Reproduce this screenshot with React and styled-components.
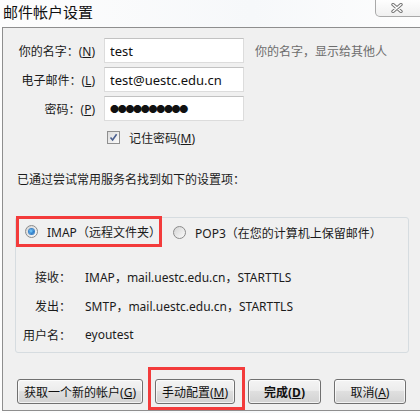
import React from 'react'
import styled, { createGlobalStyle } from 'styled-components'

const GlobalStyle = createGlobalStyle`
  html, body {
    margin: 0;
    padding: 0;
    background: #fbfbfb;
    overflow: hidden;
  }
  * {
    box-sizing: border-box;
  }
`

const Window = styled.div`
  width: 420px;
  height: 413px;
  display: flex;
  flex-direction: column;
  font-family: "Noto Sans", "Noto Sans CJK SC", sans-serif;
  font-size: 12px;
  color: #1b1b1b;
  background: linear-gradient(90deg, #fdfdfd, #f6f8fa 60%, #fdfdfd);
`

const TitleBar = styled.div`
  height: 27px;
  flex: 0 0 27px;
  display: flex;
  justify-content: space-between;
  align-items: flex-start;
  padding-left: 3px;
`

const Title = styled.div`
  font-family: "Noto Sans CJK SC", sans-serif;
  font-size: 15px;
  line-height: 24px;
  color: #111;
`

const CloseButton = styled.div`
  width: 46px;
  height: 18px;
  margin-top: -1px;
  margin-right: -1px;
  border: 1px solid #a9a9a9;
  border-top: none;
  border-bottom-left-radius: 5px;
  background: linear-gradient(#ffffff, #f0f0f0);
  display: flex;
  align-items: center;
  justify-content: center;
  padding-right: 2px;
`

const Body = styled.div`
  height: 384px;
  margin-left: 2px;
  border: 1px solid #8e8e8e;
  border-right: none;
  background: #f0f0f0;
  display: flex;
  flex-direction: column;
`

const FormGrid = styled.div`
  margin-top: 10px;
  display: grid;
  grid-template-columns: 92px 140px auto;
  grid-auto-rows: 25px;
  column-gap: 9px;
  row-gap: 4px;
  align-items: center;
`

const Label = styled.label`
  text-align: right;
  white-space: nowrap;
  font-family: "Noto Sans", "Noto Sans CJK SC", sans-serif;
  font-size: 12px;
`

const TextInput = styled.input`
  width: 140px;
  height: 25px;
  border: 1px solid #dcdcdc;
  border-top-color: #c2c2c2;
  background: #fff;
  padding: 0 5px;
  font-family: "Noto Sans", "Noto Sans CJK SC", sans-serif;
  font-size: ${(p) => (p.$dots ? '9px' : '13px')};
  letter-spacing: ${(p) => (p.$dots ? '-1.3px' : '0')};
  color: #111;
  outline: none;
`

const Hint = styled.span`
  margin-left: 2px;
  color: #6d6d6d;
  white-space: nowrap;
  font-family: "Noto Sans CJK SC", sans-serif;
`

const CheckRow = styled.label`
  grid-column: 2 / 4;
  height: 20px;
  display: flex;
  align-items: center;
  gap: 9px;
  padding-left: 3px;
`

const CheckBox = styled.span`
  width: 13px;
  height: 13px;
  border: 1px solid #8f8f8f;
  background: linear-gradient(135deg, #dcdcdc, #fbfbfb);
  display: flex;
  align-items: center;
  justify-content: center;
`

const Notice = styled.div`
  margin-top: 21px;
  margin-left: 14px;
  line-height: 16px;
  font-family: "Noto Sans CJK SC", sans-serif;
`

const GroupBox = styled.div`
  margin-top: 30px;
  margin-left: 12px;
  width: 394px;
  height: 136px;
  border: 1px solid #d6dce0;
  border-radius: 3px;
  display: flex;
  flex-direction: column;
`

const RadioRow = styled.div`
  display: flex;
  align-items: center;
`

const Highlight = styled.div`
  border: 3px solid #f33b3b;
  display: flex;
  align-items: center;
  flex: 0 0 auto;
`

const RadioHighlight = styled(Highlight)`
  width: 146px;
  height: 31px;
  margin-top: -2px;
  padding-left: 6px;
`

const RadioOption = styled.label`
  display: flex;
  align-items: center;
  gap: 9px;
  margin-left: ${(p) => p.$gap || 0}px;
  white-space: nowrap;
`

const Radio = styled.span`
  width: 13px;
  height: 13px;
  border-radius: 50%;
  border: 1px solid #8b8b8b;
  background: linear-gradient(135deg, #d4d4d4, #fbfbfb);
  display: flex;
  align-items: center;
  justify-content: center;

  &::after {
    content: '';
    width: 5px;
    height: 5px;
    border-radius: 50%;
    display: ${(p) => (p.$checked ? 'block' : 'none')};
    background: radial-gradient(circle at 40% 40%, #7fd2ff, #1b6fc2 70%, #0c4d8f);
    box-shadow: 0 0 0 1px #3d83c8;
  }
`

const Details = styled.div`
  margin-top: 15px;
  padding-left: 7px;
  display: grid;
  grid-template-columns: 48px auto;
  grid-auto-rows: 29px;
  column-gap: 14px;
  align-items: center;
`

const DetailLabel = styled.span`
  text-align: right;
  white-space: nowrap;
  font-family: "Noto Sans CJK SC", sans-serif;
`

const DetailValue = styled.span`
  white-space: nowrap;
  word-spacing: 1px;
`

const ButtonRow = styled.div`
  margin-top: 14px;
  padding-left: 14px;
  display: flex;
  align-items: flex-end;
`

const ButtonHighlight = styled(Highlight)`
  margin-left: 5px;
  margin-bottom: -6px;
  padding: 9px 7px 3px 4px;
`

const Button = styled.button`
  width: ${(p) => p.$w}px;
  height: 25px;
  margin-left: ${(p) => p.$gap || 0}px;
  padding: 0;
  border: 1px solid #707070;
  border-radius: 3px;
  background: linear-gradient(#f4f4f4, #ececec 45%, #dfdfdf 50%, #d2d2d2);
  box-shadow: inset 0 0 0 1px rgba(255, 255, 255, 0.7);
  font-family: "Noto Sans", "Noto Sans CJK SC", sans-serif;
  font-size: 12px;
  font-weight: ${(p) => (p.$bold ? 700 : 400)};
  color: #111;
  white-space: nowrap;
  cursor: default;
`

function CloseGlyph() {
  return (
    <svg width="12" height="10" viewBox="0 0 12 10">
      <path d="M2 1.5 L10 8.5 M10 1.5 L2 8.5" stroke="#767676" strokeWidth="3.4" strokeLinecap="round" fill="none" />
      <path d="M2 1.5 L10 8.5 M10 1.5 L2 8.5" stroke="#ffffff" strokeWidth="1.4" strokeLinecap="round" fill="none" />
    </svg>
  )
}

function CheckMark() {
  return (
    <svg width="9" height="9" viewBox="0 0 9 9">
      <path d="M1.5 4.5 L3.6 7 L7.6 1.2" stroke="#4a5f8f" strokeWidth="1.6" fill="none" />
    </svg>
  )
}

export default function App() {
  return (
    <Window>
      <GlobalStyle />
      <TitleBar>
        <Title>邮件帐户设置</Title>
        <CloseButton>
          <CloseGlyph />
        </CloseButton>
      </TitleBar>
      <Body>
        <FormGrid>
          <Label>你的名字：(<u>N</u>)</Label>
          <TextInput defaultValue="test" readOnly />
          <Hint>你的名字，显示给其他人</Hint>

          <Label>电子邮件：(<u>L</u>)</Label>
          <TextInput defaultValue="test@uestc.edu.cn" readOnly />
          <span />

          <Label>密码：(<u>P</u>)</Label>
          <TextInput $dots defaultValue="●●●●●●●●●●" readOnly />
          <span />

          <span />
          <CheckRow>
            <CheckBox>
              <CheckMark />
            </CheckBox>
            <span>记住密码(<u>M</u>)</span>
          </CheckRow>
        </FormGrid>

        <Notice>已通过尝试常用服务名找到如下的设置项：</Notice>

        <GroupBox>
          <RadioRow>
            <RadioHighlight>
              <RadioOption>
                <Radio $checked />
                <span>IMAP（远程文件夹）</span>
              </RadioOption>
            </RadioHighlight>
            <RadioOption $gap={11}>
              <Radio />
              <span>POP3（在您的计算机上保留邮件）</span>
            </RadioOption>
          </RadioRow>
          <Details>
            <DetailLabel>接收：</DetailLabel>
            <DetailValue>IMAP，mail.uestc.edu.cn，STARTTLS</DetailValue>
            <DetailLabel>发出：</DetailLabel>
            <DetailValue>SMTP，mail.uestc.edu.cn，STARTTLS</DetailValue>
            <DetailLabel>用户名：</DetailLabel>
            <DetailValue>eyoutest</DetailValue>
          </Details>
        </GroupBox>

        <ButtonRow>
          <Button $w={126}>获取一个新的帐户(<u>G</u>)</Button>
          <ButtonHighlight>
            <Button $w={80}>手动配置(<u>M</u>)</Button>
          </ButtonHighlight>
          <Button $w={73} $gap={3} $bold>完成(<u>D</u>)</Button>
          <Button $w={72} $gap={13}>取消(<u>A</u>)</Button>
        </ButtonRow>
      </Body>
    </Window>
  )
}
